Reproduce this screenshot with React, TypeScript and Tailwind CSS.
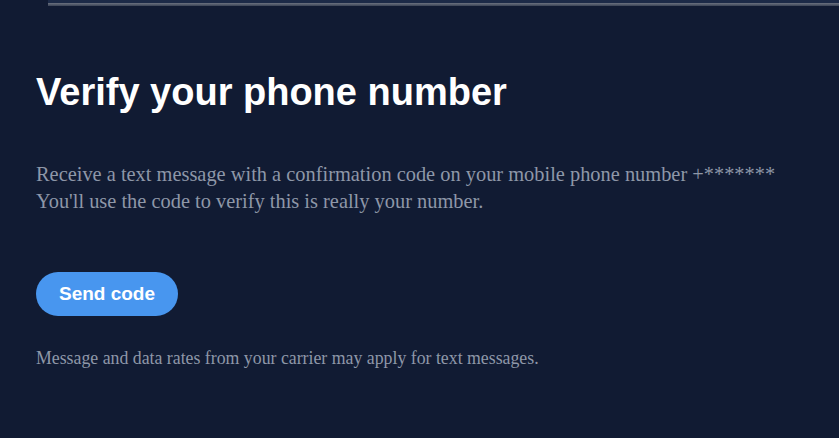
export default function App() {
    return (
        <div className="min-h-[438px] w-full bg-[#111b33]">
            <div className="ml-[48px] h-[3px] bg-[#1c2a47]" />
            <div className="ml-[48px] h-[3px] bg-gradient-to-b from-[#6b7280] to-[#3b4456]" />
            <main className="px-[36px] pt-[64px]">
                <h1 className="font-['Liberation_Sans',Arial,sans-serif] text-[38px] font-bold leading-[44px] text-white">
                    Verify your phone number
                </h1>
                <p className="mt-[47px] whitespace-nowrap font-['Liberation_Serif','Times_New_Roman',serif] text-[20.4px] leading-[27px] text-[#8e97a8]">
                    Receive a text message with a confirmation code on your mobile phone number +*******
                    <br />
                    You'll use the code to verify this is really your number.
                </p>
                <button
                    type="button"
                    className="mt-[57px] h-[44px] w-[142px] rounded-full bg-[#4896ef] font-['Liberation_Sans',Arial,sans-serif] text-[19px] font-bold text-white"
                >
                    Send code
                </button>
                <p className="mt-[31px] font-['Liberation_Serif','Times_New_Roman',serif] text-[17.8px] leading-[22px] text-[#8e97a8]">
                    Message and data rates from your carrier may apply for text messages.
                </p>
            </main>
        </div>
    );
}
